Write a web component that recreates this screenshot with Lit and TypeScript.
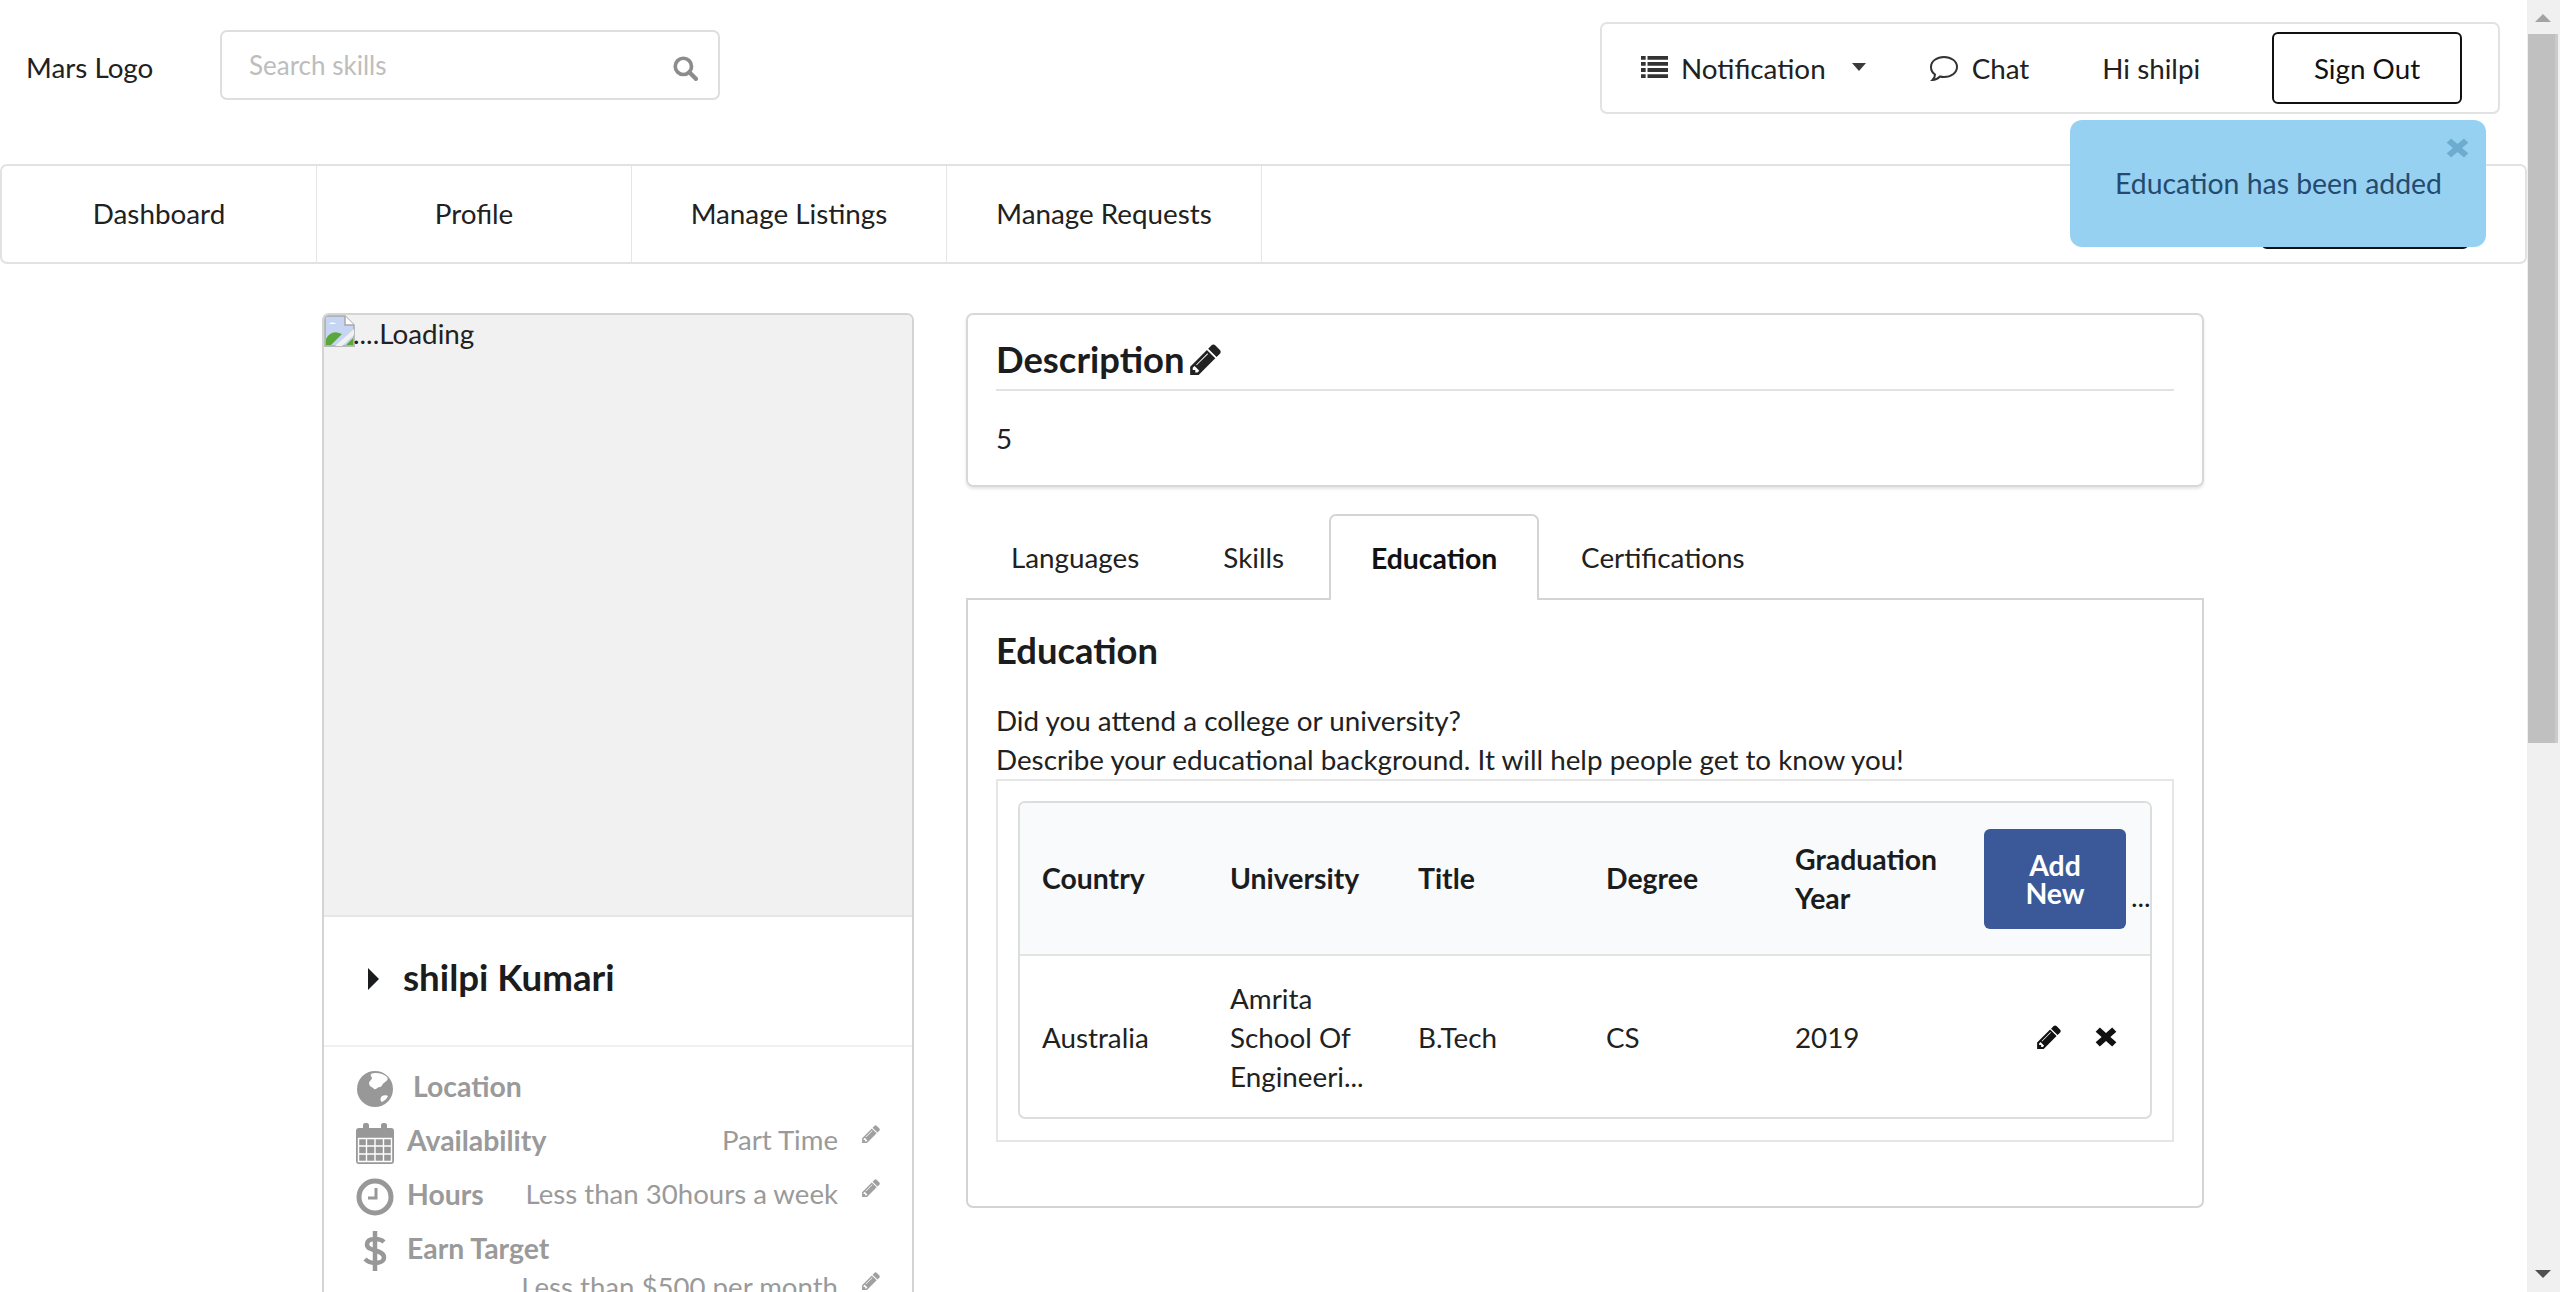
import { LitElement, html, css } from "lit";
import { customElement } from "lit/decorators.js";

const pencil = (cls: string) => html`<svg class=${cls} viewBox="120 120 1540 1540" aria-hidden="true"><path fill="currentColor" d="M491 1536l91-91-235-235-91 91v107h128v128h107zm523-928q0-22-22-22-10 0-17 7l-542 542q-7 7-7 17 0 22 22 22 10 0 17-7l542-542q7-7 7-17zm-54-192l416 416-832 832h-416v-416zm683 96q0 53-37 91l-166 166-416-416 166-165q36-38 91-38 53 0 91 38l235 234q37 39 37 90z"/></svg>`;
const times = (cls: string) => html`<svg class=${cls} viewBox="0 0 100 100" preserveAspectRatio="none" aria-hidden="true"><path fill="currentColor" d="M22 3 50 30 78 3 97 24 70 50 97 76 78 97 50 70 22 97 3 76 30 50 3 24z"/></svg>`;

@customElement("app-root")
export class AppRoot extends LitElement {
  static styles = css`
    :host { display: block; width: 2560px; height: 1292px; overflow: hidden; position: relative; background: #fff;
      font-family: Lato, "Liberation Sans", sans-serif; font-size: 27.8px; color: #212121; line-height: 39px; }
    * { box-sizing: border-box; }
    b { font-size: 28.4px; }
    .page { width: 2527px; height: 1292px; overflow: hidden; display: flex; flex-direction: column; }
    .top { display: flex; align-items: flex-start; height: 164px; flex: none; }
    .logo { margin: 48px 0 0 26px; width: 194px; flex: none; }
    .search { width: 500px; height: 70px; margin-top: 30px; border: 2px solid #dedede; border-radius: 7px; display: flex; align-items: center; justify-content: space-between; padding: 0 20px 0 27px; color: #bdbdbd; flex: none; font-size: 26px; }
    .search svg { width: 26px; height: 26px; color: #8c8c8c; margin-top: 6px; }
    .user { margin: 22px 27px 0 auto; width: 900px; height: 92px; border: 2px solid #e2e2e2; border-radius: 7px; display: flex; align-items: center; padding: 0 36px 0 39px; flex: none; }
    .user .n { display: flex; align-items: center; }
    .user .list { width: 27px; height: 22px; color: #333; margin-right: 13px; margin-top: -3px; }
    .caret { width: 0; height: 0; border-left: 7px solid transparent; border-right: 7px solid transparent; border-top: 8px solid #3a3a3a; margin-left: 26px; margin-top: -2px; }
    .chat { display: flex; align-items: center; margin-left: 63px; }
    .chat svg { width: 29px; height: 26px; margin-right: 14px; color: #333; }
    .hi { margin-left: 73px; }
    .signout { margin-left: auto; width: 190px; height: 72px; border: 2px solid #111; border-radius: 6px; display: flex; align-items: center; justify-content: center; color: #111; }
    .menu { height: 100px; flex: none; border: 2px solid #e2e2e2; border-radius: 7px; display: flex; position: relative; }
    .menu a { width: 315px; display: flex; align-items: center; justify-content: center; border-right: 1px solid #e6e6e6; padding-bottom: 2px; }
    .hidden-btn { position: absolute; left: 2259px; top: 30px; width: 208px; height: 53px; border: 2px solid #111; border-radius: 6px; }
    .main { display: flex; align-items: flex-start; padding: 49px 0 0 322px; gap: 52px; flex: none; }
    .side { width: 592px; flex: none; height: 1100px; border: 2px solid #d4d4d5; border-radius: 7px; overflow: hidden; }
    .photo { height: 602px; background: #f1f1f1; border-bottom: 2px solid #e6e6e6; display: flex; align-items: flex-start; }
    .broken { width: 31px; height: 32px; flex: none; }
    .photo span { margin: 2px 0 0 -2px; line-height: 34px; }
    .name { height: 130px; border-bottom: 2px solid #f0f0f0; display: flex; align-items: center; padding-left: 44px; font-weight: 700; font-size: 36.7px; color: #1b1c1d; }
    .name i { width: 0; height: 0; border-top: 11px solid transparent; border-bottom: 11px solid transparent; border-left: 11px solid #1b1c1d; margin-right: 24px; margin-top: -4px; }
    .name span { margin-top: -7px; }
    .info { padding: 12px 32px 0 32px; color: #9a9a9a; }
    .row { height: 54px; display: flex; align-items: center; }
    .row .ic { width: 38px; height: 42px; margin-right: 13px; flex: none; color: #989898; margin-top: 5px; }
    .row b { font-weight: 700; color: #9a9a9a; }
    .row .v { margin-left: auto; margin-right: 24px; margin-top: -2px; font-size: 27.6px; }
    .row .ed { width: 18px; height: 18px; color: #a0a0a0; margin-top: -12px; flex: none; }
    .row.loc b { margin-left: 6px; }
    .row.sub { justify-content: flex-end; margin-top: -15px; }
    .content { width: 1238px; flex: none; }
    .desc { height: 174px; border: 2px solid #d8d8d9; border-radius: 7px; box-shadow: 0 2px 3px rgba(0,0,0,.1); padding: 0 28px; }
    .desc h3 { margin: 0; height: 76px; border-bottom: 2px solid #e2e2e2; font-size: 36.4px; font-weight: 700; color: #1b1c1d; display: flex; align-items: center; padding-top: 14px; gap: 5px; }
    .desc h3 svg { width: 31px; height: 31px; color: #222; }
    .desc p { margin: 0; padding-top: 28px; }
    .tabs { margin-top: 27px; display: flex; height: 86px; position: relative; z-index: 1; }
    .tabs a { display: flex; align-items: center; padding: 1px 0 0; }
    .tabs a.l { margin-left: 45px; }
    .tabs a.s { margin-left: 84px; }
    .tabs a.e { margin-left: 45px; width: 210px; justify-content: center; font-weight: 700; font-size: 28.4px; color: #111; border: 2px solid #d4d4d5; border-bottom: 0; border-radius: 7px 7px 0 0; background: #fff; height: 86px; }
    .tabs a.c { margin-left: 42px; }
    .tab-body { height: 610px; margin-top: -2px; border: 2px solid #d4d4d5; border-radius: 0 0 7px 7px; padding: 29px 28px 0; }
    .tab-body h3 { margin: 0; font-size: 36.4px; line-height: 43px; font-weight: 700; color: #1b1c1d; }
    .tab-body p { margin: 29px 0 0; }
    .wrap { height: 363px; border: 2px solid #e6e6e6; padding: 20px 20px 0 20px; }
    .tbl { height: 318px; border: 2px solid #dcdddd; border-radius: 7px; overflow: hidden; display: flex; flex-direction: column; }
    .tr { display: grid; grid-template-columns: 188px 188px 188px 189px 189px 1fr; align-items: center; padding-left: 22px; }
    .thead { height: 153px; background: #f9fafb; border-bottom: 2px solid #e2e3e3; font-weight: 700; font-size: 28.4px; color: #1b1c1d; }
    .tbody { flex: 1; padding-top: 1px; }
    .addcell { display: flex; align-items: flex-end; }
    .add { width: 142px; height: 100px; background: #3b5998; color: #fff; border-radius: 6px; display: flex; align-items: center; justify-content: center; text-align: center; line-height: 28px; font-weight: 700; font-size: 28.4px; flex: none; }
    .dots { font-weight: 400; font-size: 27.8px; line-height: 20px; margin-left: 5px; margin-bottom: 22px; flex: none; }
    .actions { display: flex; align-items: center; gap: 34px; padding-left: 53px; color: #111; }
    .actions svg { flex: none; }
    .actions .p { width: 24px; height: 24px; }
    .actions .x { width: 22px; height: 20px; }
    .toast { position: absolute; left: 2070px; top: 120px; width: 416px; height: 127px; background: #97d1f1; border-radius: 12px; color: #254a70; z-index: 3; display: flex; align-items: center; padding: 0 0 0 45px; font-size: 28.4px; }
    .toast svg { position: absolute; right: 17px; top: 18px; width: 23px; height: 20px; color: #6eaccf; }
    .sb { position: absolute; right: 0; top: 0; width: 33px; height: 1292px; background: #f0f0f0; }
    .sb .thumb { position: absolute; left: 1px; width: 30px; top: 34px; height: 709px; background: #c0c0c0; border-right: 3px solid #cbcbcb; }
    .sb .up, .sb .dn { position: absolute; left: 8px; width: 0; height: 0; border-left: 8px solid transparent; border-right: 8px solid transparent; }
    .sb .up { top: 14px; border-bottom: 8px solid #a3a3a3; }
    .sb .dn { bottom: 14px; border-top: 8px solid #4f4f4f; }
  `;

  render() {
    return html`
      <div class="page">
        <div class="top">
          <div class="logo">Mars Logo</div>
          <div class="search"><span>Search skills</span>
            <svg viewBox="0 0 24 24" aria-hidden="true"><circle cx="10.5" cy="10.500" r="7.500" fill="none" stroke="currentColor" stroke-width="3.400"/><path d="M16 16l6 6" stroke="currentColor" stroke-width="4" stroke-linecap="round"/></svg>
          </div>
          <div class="user">
            <div class="n">
              <svg class="list" viewBox="0 0 29 23" preserveAspectRatio="none" aria-hidden="true"><path fill="currentColor" d="M0 0h5v4H0zM7 0h22v4H7zM0 6.300h5v4H0zM7 6.300h22v4H7zM0 12.600h5v4H0zM7 12.600h22v4H7zM0 19h5v4H0zM7 19h22v4H7z"/></svg>
              Notification<i class="caret"></i>
            </div>
            <div class="chat">
              <svg viewBox="0 0 29 26" aria-hidden="true"><path fill="none" stroke="currentColor" stroke-width="2" d="M15 2c7 0 13 4 13 10s-6 10-13 10c-1.500 0-3-.2-4-.5C9 23.500 6.500 25 3.500 25c1.500-1.500 2.500-3.500 2.500-5.500C3 17.500 2 15 2 12 2 6 8 2 15 2z"/></svg>
              Chat
            </div>
            <div class="hi">Hi shilpi</div>
            <div class="signout">Sign Out</div>
          </div>
        </div>
        <nav class="menu">
          <a>Dashboard</a><a>Profile</a><a>Manage Listings</a><a>Manage Requests</a>
          <div class="hidden-btn"></div>
        </nav>
        <div class="main">
          <aside class="side">
            <div class="photo">
              <svg class="broken" viewBox="0 0 31 32" aria-hidden="true">
                <path d="M1 1h20l9 9v21H1z" fill="#c6d6f2" stroke="#a8a8a8" stroke-width="1.500"/>
                <path d="M21 1v9h9" fill="#fff" stroke="#a8a8a8" stroke-width="1.500"/>
                <path d="M5 9c2-2 5-2 7 0H5z" fill="#fff"/>
                <path d="M2 30v-6c3-6 8-8 13-6l3 1-11 11z" fill="#5aa83a"/>
                <path d="M22 30l7-7v7z" fill="#5aa83a"/>
                <path d="M11 31l19-17v6L18 31z" fill="#f1f1f1"/>
              </svg>
              <span>....Loading</span>
            </div>
            <div class="name"><i></i><span>shilpi Kumari</span></div>
            <div class="info">
              <div class="row loc">
                <svg class="ic" viewBox="0 0 38 42" aria-hidden="true"><circle cx="19" cy="21" r="18" fill="currentColor"/><path fill="#fff" d="M15 6c4-2 12-1 16 3 2 3-1 4-3 6-2 1-2 4-4 4-3 0-3 3-6 2-1-2-5-2-5-6 0-2 3-3 3-5 0-1-2-2-1-4zM26 28c2-1 5-1 6 0-1 3-4 5-6 6-2-1-2-4 0-6z"/></svg>
                <b>Location</b>
              </div>
              <div class="row">
                <svg class="ic" viewBox="0 0 38 42" aria-hidden="true"><path fill="currentColor" d="M0 9c0-2 1-3 3-3h4V3c0-1 1-2 2-2h2c1 0 2 1 2 2v3h12V3c0-1 1-2 2-2h2c1 0 2 1 2 2v3h4c2 0 3 1 3 3v30c0 2-1 3-3 3H3c-2 0-3-1-3-3z"/><path fill="none" stroke="#fff" stroke-width="1.400" d="M2.500 16.500h33v23h-33zM2.500 24h33M2.500 32h33M10.500 16.500v23M19 16.500v23M27.500 16.500v23"/></svg>
                <b>Availability</b><span class="v">Part Time</span>${pencil("ed")}
              </div>
              <div class="row">
                <svg class="ic" viewBox="0 0 38 42" aria-hidden="true"><circle cx="19" cy="21" r="16" fill="none" stroke="currentColor" stroke-width="5"/><path d="M20 12v10h-8" fill="none" stroke="currentColor" stroke-width="3"/></svg>
                <b>Hours</b><span class="v">Less than 30hours a week</span>${pencil("ed")}
              </div>
              <div class="row">
                <svg class="ic" viewBox="0 0 38 42" aria-hidden="true"><path fill="none" stroke="currentColor" stroke-width="4.500" d="M28 12c-2-2-5-3-9-3-5 0-8 2-8 5.500C11 22 28 19 28 27.500c0 3.500-4 5.500-9 5.500-4 0-7-1-10-4M19 1v40"/></svg>
                <b>Earn Target</b>
              </div>
              <div class="row sub"><span class="v">Less than $500 per month</span>${pencil("ed")}</div>
            </div>
          </aside>
          <section class="content">
            <div class="desc">
              <h3>Description ${pencil("")}</h3>
              <p>5</p>
            </div>
            <div class="tabs">
              <a class="l">Languages</a><a class="s">Skills</a><a class="e">Education</a><a class="c">Certifications</a>
            </div>
            <div class="tab-body">
              <h3>Education</h3>
              <p>Did you attend a college or university?<br />Describe your educational background. It will help people get to know you!</p>
              <div class="wrap">
                <div class="tbl">
                  <div class="tr thead">
                    <div>Country</div><div>University</div><div>Title</div><div>Degree</div><div>Graduation<br />Year</div>
                    <div class="addcell"><div class="add">Add<br />New</div><span class="dots">...</span></div>
                  </div>
                  <div class="tr tbody">
                    <div>Australia</div><div>Amrita<br />School Of<br />Engineeri...</div><div>B.Tech</div><div>CS</div><div>2019</div>
                    <div class="actions">${pencil("p")}${times("x")}</div>
                  </div>
                </div>
              </div>
            </div>
          </section>
        </div>
      </div>
      <div class="toast"><span>Education has been added</span>${times("")}</div>
      <div class="sb"><div class="up"></div><div class="thumb"></div><div class="dn"></div></div>
    `;
  }
}
